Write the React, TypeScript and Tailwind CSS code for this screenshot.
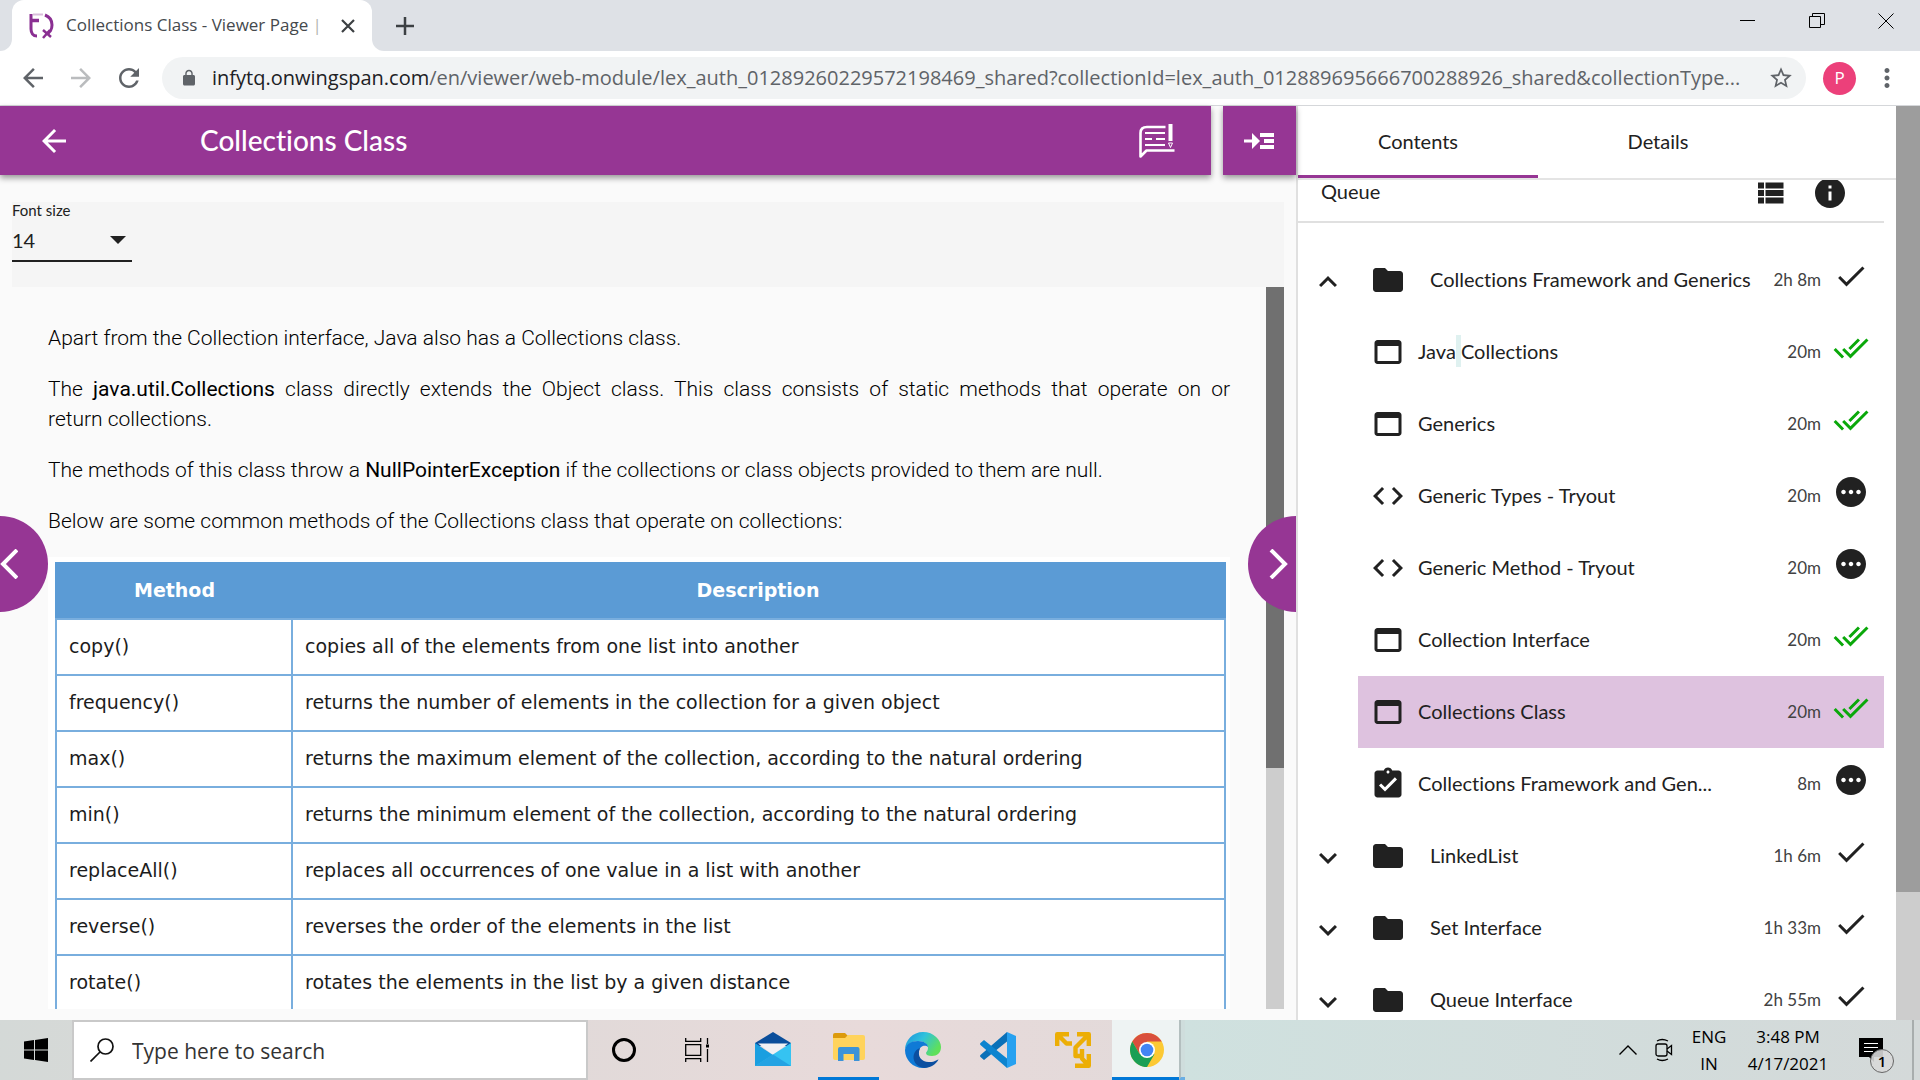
import React from "react";

type IconProps = { d: string; className?: string };

function Icon({ d, className = "size-9" }: IconProps) {
  return (
    <svg viewBox="0 0 24 24" fill="currentColor" aria-hidden="true" className={`shrink-0 ${className}`}>
      <path d={d} />
    </svg>
  );
}

const paths = {
  back: "M20 11H7.83l5.59-5.59L12 4l-8 8 8 8 1.41-1.41L7.83 13H20v-2z",
  folder: "M10 4H4c-1.1 0-1.99.9-1.99 2L2 18c0 1.1.9 2 2 2h16c1.1 0 2-.9 2-2V8c0-1.1-.9-2-2-2h-8l-2-2z",
  web: "M19 4H5c-1.11 0-2 .9-2 2v12c0 1.1.89 2 2 2h14c1.1 0 2-.9 2-2V6c0-1.1-.89-2-2-2zm0 14H5V8h14v10z",
  code: "M9.4 16.6L4.8 12l4.6-4.6L8 6l-6 6 6 6 1.4-1.4zm5.2 0l4.6-4.6-4.6-4.6L16 6l6 6-6 6-1.4-1.4z",
  quiz: "M19 3h-4.18C14.4 1.84 13.3 1 12 1c-1.3 0-2.4.84-2.82 2H5c-1.1 0-2 .9-2 2v14c0 1.1.9 2 2 2h14c1.1 0 2-.9 2-2V5c0-1.1-.9-2-2-2zm-7 0c.55 0 1 .45 1 1s-.45 1-1 1-1-.45-1-1 .45-1 1-1zm-2 14l-4-4 1.41-1.41L10 14.17l6.59-6.59L18 9l-8 8z",
  up: "M12 8l-6 6 1.41 1.41L12 10.83l4.59 4.58L18 14z",
  down: "M16.59 8.59L12 13.17 7.41 8.59 6 10l6 6 6-6z",
  done: "M9 16.2L4.8 12l-1.4 1.4L9 19 21 7l-1.4-1.4L9 16.2z",
  doneAll: "M18 7l-1.41-1.41-6.34 6.34 1.41 1.41L18 7zm4.24-1.41L11.66 16.17 7.48 12l-1.41 1.41L11.66 19l12-12-1.42-1.41zM.41 13.41L6 19l1.41-1.41L1.83 12 .41 13.41z",
  pending: "M12 2C6.48 2 2 6.48 2 12s4.48 10 10 10 10-4.48 10-10S17.52 2 12 2zM7 13.5c-.83 0-1.5-.67-1.5-1.5s.67-1.5 1.5-1.5 1.5.67 1.5 1.5-.67 1.5-1.5 1.5zm5 0c-.83 0-1.5-.67-1.5-1.5s.67-1.5 1.5-1.5 1.5.67 1.5 1.5-.67 1.5-1.5 1.5zm5 0c-.83 0-1.5-.67-1.5-1.5s.67-1.5 1.5-1.5 1.5.67 1.5 1.5-.67 1.5-1.5 1.5z",
  list: "M4 14h4v-4H4v4zm0 5h4v-4H4v4zM4 9h4V5H4v4zm5 5h12v-4H9v4zm0 5h12v-4H9v4zM9 5v4h12V5H9z",
  info: "M12 2C6.48 2 2 6.48 2 12s4.48 10 10 10 10-4.48 10-10S17.52 2 12 2zm1 15h-2v-6h2v6zm0-8h-2V7h2v2z",
  lock: "M18 8h-1V6c0-2.76-2.24-5-5-5S7 3.24 7 6v2H6c-1.1 0-2 .9-2 2v10c0 1.1.9 2 2 2h12c1.1 0 2-.9 2-2V10c0-1.1-.9-2-2-2zM15.1 8H8.9V6c0-1.71 1.39-3.1 3.1-3.1 1.71 0 3.1 1.39 3.1 3.1v2z",
  reload: "M17.65 6.35C16.2 4.9 14.21 4 12 4c-4.42 0-7.99 3.58-7.99 8s3.57 8 7.99 8c3.73 0 6.84-2.55 7.73-6h-2.08c-.82 2.33-3.04 4-5.65 4-3.31 0-6-2.69-6-6s2.69-6 6-6c1.66 0 3.14.69 4.22 1.78L13 11h7V4l-2.35 2.35z",
  star: "M22 9.24l-7.19-.62L12 2 9.19 8.63 2 9.24l5.46 4.73L5.82 21 12 17.27 18.18 21l-1.63-7.03L22 9.24zM12 15.4l-3.76 2.27 1-4.28-3.32-2.88 4.38-.38L12 6.1l1.71 4.04 4.38.38-3.32 2.88 1 4.28L12 15.4z",
  more: "M12 8c1.1 0 2-.9 2-2s-.9-2-2-2-2 .9-2 2 .9 2 2 2zm0 2c-1.1 0-2 .9-2 2s.9 2 2 2 2-.9 2-2-.9-2-2-2zm0 6c-1.1 0-2 .9-2 2s.9 2 2 2 2-.9 2-2-.9-2-2-2z",
};

function BrowserTabs() {
  return (
    <div className="flex h-[51px] shrink-0 items-stretch bg-[#dee1e6]">
      <div className="w-3 bg-white">
        <div className="h-full rounded-br-xl bg-[#dee1e6]" />
      </div>
      <div className="flex w-[360px] items-center rounded-t-xl bg-white pr-3 pl-4">
        <svg viewBox="0 0 26 26" className="size-[26px] shrink-0" fill="none" stroke="#8a2f92" strokeWidth="3">
          <path d="M3 1v15c0 4 2 7 6 7" />
          <path d="M2 7.500h9" strokeWidth="3.500" />
          <path d="M17 2c5 2 7 6 7 10s-2 8-6 9" />
          <path d="M5 1.500h10" stroke="#d9bddb" strokeWidth="2" />
          <path d="M15 17l8 7M22 17l-7 8" strokeWidth="2.500" />
        </svg>
        <span className="relative ml-3 flex-1 overflow-hidden pb-0.5 text-[17px] whitespace-nowrap text-[#45494d]">
          Collections Class - Viewer Page |
          <span className="absolute inset-y-0 right-0 w-4 bg-linear-to-r from-white/0 to-white" />
        </span>
        <button aria-label="Close tab" className="ml-3 flex size-6 items-center justify-center text-[#3c4043]">
          <svg viewBox="0 0 14 14" className="size-3.5" stroke="currentColor" strokeWidth="2.200">
            <path d="M1 1l12 12M13 1L1 13" />
          </svg>
        </button>
      </div>
      <div className="w-3 bg-white">
        <div className="h-full rounded-bl-xl bg-[#dee1e6]" />
      </div>
      <div className="flex flex-1 items-center justify-between bg-[#dee1e6]">
        <button aria-label="New tab" className="ml-2.5 flex size-[22px] items-center justify-center text-[#3c4043]">
          <svg viewBox="0 0 18 18" className="size-[18px]" stroke="currentColor" strokeWidth="2.500">
            <path d="M9 0v18M0 9h18" />
          </svg>
        </button>
        <div className="flex h-full items-start">
          <button aria-label="Minimize" className="flex h-[42px] w-[69px] items-center justify-center">
            <svg viewBox="0 0 16 16" className="size-4" stroke="#000" fill="none"><path d="M0 7.500h15" /></svg>
          </button>
          <button aria-label="Restore" className="flex h-[42px] w-[69px] items-center justify-center">
            <svg viewBox="0 0 16 16" className="size-4" stroke="#000" fill="none"><path d="M.5 3.500h11v11H.5zM3.500 3.500v-3h12v11h-4" /></svg>
          </button>
          <button aria-label="Close" className="flex h-[42px] w-[69px] items-center justify-center">
            <svg viewBox="0 0 16 16" className="size-4" stroke="#000" fill="none"><path d="M.5 .5l15 15M15.500 .5l-15 15" /></svg>
          </button>
        </div>
      </div>
    </div>
  );
}

function AddressBar() {
  return (
    <div className="flex h-[55px] shrink-0 items-center border-b border-[#d5d7da] bg-white pr-[18px] pl-[18px] text-[#5f6368]">
      <button aria-label="Back" className="flex size-[30px] items-center justify-center"><Icon d={paths.back} className="size-[30px]" /></button>
      <button aria-label="Forward" className="ml-[18px] flex size-[30px] items-center justify-center text-[#babcbe]"><Icon d={paths.back} className="size-[30px] rotate-180" /></button>
      <button aria-label="Reload" className="ml-[18px] flex size-[30px] items-center justify-center"><Icon d={paths.reload} className="size-[30px]" /></button>
      <div className="ml-[18px] flex h-[42px] min-w-0 flex-1 items-center rounded-full bg-[#f1f3f4] pr-3 pl-[18px]">
        <Icon d={paths.lock} className="size-[18px]" />
        <span className="ml-3.5 flex-1 truncate text-[20px]">
          <span className="text-[#202124]">infytq.onwingspan.com</span>
          /en/viewer/web-module/lex_auth_01289260229572198469_shared?collectionId=lex_auth_012889695666700288926_shared&amp;collectionType...
        </span>
        <button aria-label="Bookmark"><Icon d={paths.star} className="size-[26px]" /></button>
      </div>
      <button aria-label="Profile" className="ml-[17px] flex size-[33px] items-center justify-center rounded-full bg-[#ec407a] text-[17px] text-white">P</button>
      <button aria-label="Menu" className="ml-4"><Icon d={paths.more} className="size-[30px]" /></button>
    </div>
  );
}

const methods = [
  ["copy()", "copies all of the elements from one list into another"],
  ["frequency()", "returns the number of elements in the collection for a given object"],
  ["max()", "returns the maximum element of the collection, according to the natural ordering"],
  ["min()", "returns the minimum element of the collection, according to the natural ordering"],
  ["replaceAll()", "replaces all occurrences of one value in a list with another"],
  ["reverse()", "reverses the order of the elements in the list"],
  ["rotate()", "rotates the elements in the list by a given distance"],
];

function Lesson() {
  return (
    <section className="relative flex min-w-0 flex-1 flex-col bg-[#fafafa]">
      <header className="z-10 flex h-[69px] shrink-0 gap-3 font-[Lato,sans-serif] [font-variant-ligatures:none]">
        <div className="flex flex-1 items-center bg-[#963694] pr-9 pl-9 text-white shadow-[0_3px_6px_rgba(0,0,0,0.4)]">
          <button aria-label="Go back"><Icon d={paths.back} /></button>
          <h1 className="ml-32 flex-1 pb-0.5 text-[28px] leading-9 font-medium">Collections Class</h1>
          <button aria-label="Feedback">
            <svg viewBox="0 0 36 36" className="size-9" fill="none" stroke="#fff" strokeWidth="2.600">
              <path d="M26.500 4H8C3.500 4 1.500 6 1.500 10v23.500l6-6h28" strokeLinejoin="round" />
              <path d="M6 10h20M6 16h7M17 16h9M6 22h20" strokeWidth="2" />
              <path d="M29.500 1h4v17h-4z" fill="#fff" stroke="none" />
              <path d="M29.500 20h4l-2 4.500z" fill="none" strokeWidth="1" />
            </svg>
          </button>
        </div>
        <button aria-label="Toggle contents" className="flex w-[73px] items-center justify-center bg-[#963694] pr-0.5 shadow-[0_3px_6px_rgba(0,0,0,0.4)]">
          <svg viewBox="0 0 32 18" className="h-[18px] w-8" fill="#fff">
            <path d="M1 7.500h8V1l8 8-8 8v-6.500H1zM17 1h14v4H17zM21 7h10v4H21zM17 13h14v4H17z" />
          </svg>
        </button>
      </header>

      <div className="mx-3 mt-[27px] h-[85px] shrink-0 bg-[#f5f5f5] font-[Lato,sans-serif] text-[#212121] [font-variant-ligatures:none]">
        <div className="flex w-[120px] flex-col border-b-2 border-[#212121]">
          <label htmlFor="font-size" className="text-[15px] leading-[17px]">Font size</label>
          <div className="relative flex h-[41px] items-center">
            <select id="font-size" defaultValue="14" className="w-full appearance-none bg-transparent text-[20px] leading-6 outline-none">
              <option>14</option>
              <option>16</option>
              <option>18</option>
            </select>
            <svg viewBox="0 0 16 8" className="pointer-events-none absolute right-1.5 h-2 w-4" fill="#212121"><path d="M0 0h16L8 8z" /></svg>
          </div>
        </div>
      </div>

      <div className="mr-3 mb-[11px] flex min-h-0 flex-1">
        <article className="min-w-0 flex-1 overflow-hidden pt-9 pr-9 pl-12 font-[Roboto,sans-serif] text-[21px] leading-[30px] font-light text-black">
          <p className="mb-[21px]">Apart from the Collection interface, Java also has a Collections class.</p>
          <p className="mb-[21px] text-justify">
            The <b className="font-normal">java.util.Collections</b> class directly extends the Object class. This class consists of static methods that operate on or return&nbsp;collections.
          </p>
          <p className="mb-[21px]">
            The methods of this class throw a <b className="font-normal">NullPointerException</b> if the collections or class objects provided to them are null.
          </p>
          <p className="mb-[21px]">Below are some common methods of the Collections class that operate on collections:</p>
          <div className="bg-white pt-[5px] pr-1 pl-[7px]">
            <table className="w-full border-collapse border-2 border-[#5b9bd5] font-['DejaVu_Sans',sans-serif] text-[19px] leading-6 font-normal text-[#1c1c1c]">
              <thead>
                <tr className="h-14 bg-[#5b9bd5] text-white">
                  <th className="w-[236px] pb-0.5 font-bold">Method</th>
                  <th className="pb-0.5 font-bold">Description</th>
                </tr>
              </thead>
              <tbody>
                {methods.map(([name, text]) => (
                  <tr key={name} className="h-14">
                    <td className="border-2 border-[#79aede] px-3 pb-0.5">{name}</td>
                    <td className="border-2 border-[#79aede] px-3 pb-0.5">{text}</td>
                  </tr>
                ))}
              </tbody>
            </table>
          </div>
        </article>
        <div className="w-[18px] shrink-0 bg-[#cdcdcd]">
          <div className="h-2/3 bg-[#707070]" />
        </div>
      </div>

      <button aria-label="Previous" className="absolute top-[410px] left-0 flex h-24 w-12 items-center rounded-r-full bg-[#963694]">
        <svg viewBox="0 0 18 30" className="h-[30px] w-[18px]" fill="none" stroke="#fff" strokeWidth="4"><path d="M17 1L3 15l14 14" /></svg>
      </button>
      <button aria-label="Next" className="absolute top-[410px] right-0 flex h-24 w-12 items-center justify-end rounded-l-full bg-[#963694] pr-2">
        <svg viewBox="0 0 20 30" className="h-[30px] w-5" fill="none" stroke="#fff" strokeWidth="4"><path d="M3 1l14 14L3 29" /></svg>
      </button>
    </section>
  );
}

type Node = { label: React.ReactNode; icon: string; time: string; status: string; toggle?: string; active?: boolean };

const nodes: Node[] = [
  { label: "Collections Framework and Generics", icon: paths.folder, time: "2h 8m", status: "done", toggle: "up" },
  { label: <>Java<span className="bg-[#dff1f0] py-1"> </span>Collections</>, icon: paths.web, time: "20m", status: "all" },
  { label: "Generics", icon: paths.web, time: "20m", status: "all" },
  { label: "Generic Types - Tryout", icon: paths.code, time: "20m", status: "pending" },
  { label: "Generic Method - Tryout", icon: paths.code, time: "20m", status: "pending" },
  { label: "Collection Interface", icon: paths.web, time: "20m", status: "all" },
  { label: "Collections Class", icon: paths.web, time: "20m", status: "all", active: true },
  { label: "Collections Framework and Gen...", icon: paths.quiz, time: "8m", status: "pending" },
  { label: "LinkedList", icon: paths.folder, time: "1h 6m", status: "done", toggle: "down" },
  { label: "Set Interface", icon: paths.folder, time: "1h 33m", status: "done", toggle: "down" },
  { label: "Queue Interface", icon: paths.folder, time: "2h 55m", status: "done", toggle: "down" },
];

function TreeRow({ node }: { node: Node }) {
  return (
    <li className="flex h-[72px]">
      <div className="flex w-[60px] items-center justify-center pt-1">
        {node.toggle && (
          <button aria-label={node.toggle === "up" ? "Collapse" : "Expand"}>
            <Icon d={node.toggle === "up" ? paths.up : paths.down} />
          </button>
        )}
      </div>
      <a href="#" className={`flex flex-1 items-center pr-[15px] pl-3 ${node.active ? "bg-[#dec2df]" : ""}`}>
        <Icon d={node.icon} />
        <span className={`flex-1 pb-0.5 text-[20px] leading-6 whitespace-nowrap ${node.toggle ? "ml-6" : "ml-3"}`}>{node.label}</span>
        <span className="mr-3 text-[17px] leading-6 whitespace-nowrap text-[#424242]">{node.time}</span>
        <span className="pb-2">
          {node.status === "all" && <Icon d={paths.doneAll} className="size-9 text-[#0aa80a]" />}
          {node.status === "done" && <Icon d={paths.done} />}
          {node.status === "pending" && <Icon d={paths.pending} />}
        </span>
      </a>
    </li>
  );
}

function Contents() {
  return (
    <aside className="flex w-[600px] shrink-0 flex-col border-l-2 border-[#e0e0e0] bg-white font-[Lato,sans-serif] text-[#212121] [font-variant-ligatures:none]">
      <div role="tablist" className="flex h-[74px] shrink-0 border-b-2 border-[#e4e4e4] text-[20px]">
        <button role="tab" aria-selected="true" className="w-60 border-b-3 border-[#963694] pt-px">Contents</button>
        <button role="tab" aria-selected="false" className="w-60 pb-0.5">Details</button>
      </div>
      <div className="flex min-h-0 flex-1 flex-col overflow-hidden pr-3">
        <div className="flex h-[43px] shrink-0 items-start justify-between border-b-2 border-[#e0e0e0] pr-9 pl-[23px]">
          <h2 className="text-[20px] leading-[22px]">Queue</h2>
          <div className="-mt-[5px] flex gap-6">
            <button aria-label="List view"><Icon d={paths.list} /></button>
            <button aria-label="Information"><Icon d={paths.info} /></button>
          </div>
        </div>
        <ul className="mt-[21px]">
          {nodes.map((node, i) => <TreeRow key={i} node={node} />)}
        </ul>
      </div>
    </aside>
  );
}

function Taskbar() {
  return (
    <footer className="flex h-[60px] shrink-0 items-stretch bg-linear-to-r from-[#d4d9d7] via-[#e8dada] via-[45%] to-[#d4d9d9]">
      <button aria-label="Start" className="flex w-[72px] items-center justify-center">
        <svg viewBox="0 0 24 24" className="size-6"><path d="M0 3.400L10 2v9.500H0zM11 1.900L24 0v11.500H11zM0 12.500h10V22L0 20.600zM11 12.500h13V24l-13-1.900z" /></svg>
      </button>
      <label className="flex w-[516px] items-center border-2 border-[#c9c9c9] bg-white pl-4">
        <svg viewBox="0 0 24 24" className="size-6" fill="none" stroke="#111" strokeWidth="1.700"><circle cx="15.500" cy="8.500" r="7.500" /><path d="M10 14L.5 23.500" /></svg>
        <input aria-label="Search" placeholder="Type here to search" className="ml-[18px] min-w-0 flex-1 bg-transparent pt-1 text-[21px] outline-none placeholder:text-[#333]" />
      </label>
      <button aria-label="Cortana" className="flex w-[71px] items-center justify-center">
        <svg viewBox="0 0 26 26" className="size-[26px]" fill="none" stroke="#000" strokeWidth="3"><circle cx="13" cy="13" r="10.500" /></svg>
      </button>
      <button aria-label="Task View" className="flex w-[76px] items-center justify-center">
        <svg viewBox="0 0 24 24" className="size-6" fill="none" stroke="#000" strokeWidth="1.300"><path d="M.7 0v3.300h15V0M.7 6.700h15v10.600H.7zM.7 24v-3.300h15V24M22.500 0v6M22.500 11v13" /><path d="M21 6.500h3v3h-3z" fill="#000" stroke="none" /></svg>
      </button>
      <button aria-label="Mail" className="flex w-[76px] items-center justify-center">
        <svg viewBox="0 0 36 36" className="size-9">
          <path d="M0 11L18 0l18 11v3H0z" fill="#0a4e9b" /><path d="M3 11.500h30L18 23z" fill="#f1f1f4" />
          <path d="M0 11l18 12v11H0z" fill="#1a9fe0" /><path d="M36 11L0 34h36z" fill="#35c3f2" /><path d="M18 22.500L36 34H0z" fill="#1e96dd" opacity=".7" />
        </svg>
      </button>
      <button aria-label="File Explorer" className="mx-[7px] flex w-[61px] items-center justify-center border-b-3 border-[#0078d7]">
        <svg viewBox="0 0 32 32" className="size-8">
          <path d="M0 2a2 2 0 012-2h10l3 3v3H0z" fill="#dc9a0c" /><path d="M0 5h12l3-3h15a2 2 0 012 2v21a2 2 0 01-2 2H2a2 2 0 01-2-2z" fill="#ffd35c" />
          <path d="M5 28V16a2 2 0 012-2h17.500a2 2 0 012 2v12H21v-7H10.500v7z" fill="#3b93d8" />
        </svg>
      </button>
      <button aria-label="Edge" className="flex w-[74px] items-center justify-center">
        <svg viewBox="0 0 36 36" className="size-9">
          <defs>
            <linearGradient id="edge-top" x1="0" x2="1" y1="0" y2=".5"><stop offset="0" stopColor="#1c8fdc" /><stop offset=".5" stopColor="#2fc2dc" /><stop offset="1" stopColor="#5fe05a" /></linearGradient>
          </defs>
          <path d="M0 18C0 8 8 0 18 0c11 0 18 8 18 15 0 6-4 9-9 9-4 0-6-1-6-3 0-1 2-2 2-5 0-4-4-7-10-7C6 9 1 13 0 18z" fill="url(#edge-top)" />
          <path d="M0 18c1-6 6-9 13-9 6 0 10 3 10 6-2-2-8-2-9 4-2 7 4 14 13 13-3 3-6 4-9 4C8 36 0 28 0 18z" fill="#0f7ad6" />
          <path d="M15 16c-4 9 3 15 10 14 5 0 8-3 8.500-2.500C31 32 26 36 19 36 11 35 7 28 9 22c1-3 3-5 6-6z" fill="#0c4fa0" />
        </svg>
      </button>
      <button aria-label="Visual Studio Code" className="flex w-[76px] items-center justify-center">
        <svg viewBox="0 0 36 36" className="size-9">
          <path d="M27 0l9 4v28l-9 4z" fill="#27a1f0" /><path d="M27 0v9.500L4 28l-3.500-3c-.6-.6-.6-1.500 0-2z" fill="#0a70b8" />
          <path d="M27 36v-9.500L4 8 .5 11c-.6.6-.6 1.500 0 2z" fill="#0d84cf" />
        </svg>
      </button>
      <button aria-label="VMware" className="flex w-[74px] items-center justify-center">
        <svg viewBox="0 0 36 36" className="size-9" fill="none" stroke="#ecae06" strokeWidth="4.400" strokeLinejoin="round">
          <path d="M2.200 14V2.200H14M3 3l8.500 8.500H17M22 2.200h11.800V14M33 3L20.500 15.500V24H25M20 33.800h13.800V22M33 33l-6-6.500V17" />
        </svg>
      </button>
      <button aria-label="Chrome" className="ml-0.5 flex w-[67px] items-center justify-center border-b-3 border-[#0078d7] bg-[#eef3f3] pt-[3px] pl-[3px]">
        <svg viewBox="0 0 34 34" className="size-[34px]">
          <circle cx="17" cy="17" r="17" fill="#fcc934" />
          <path d="M2.300 8.500A17 17 0 0131.700 8.500H17L9.600 21z" fill="#d94f3d" />
          <path d="M2.300 8.500A17 17 0 0017 34l7.400-12.700L9.600 21z" fill="#1a9f55" />
          <circle cx="17" cy="17" r="8" fill="#fff" /><circle cx="17" cy="17" r="6.300" fill="#4285f4" />
        </svg>
      </button>
      <div className="w-1.5 border-b-3 border-l-2 border-b-[#6aaee3] border-l-[#b4bfbf] bg-[#cfdddc]" />
      <div className="flex flex-1 items-center justify-end bg-linear-to-r from-[#cfe1df] to-[#d4d9d9] text-center text-[17px] leading-[27px] text-black">
        <button aria-label="Show hidden icons">
          <svg viewBox="0 0 18 10" className="h-2.5 w-[18px]" fill="none" stroke="#000" strokeWidth="1.400"><path d="M.5 9.500L9 1l8.500 8.500" /></svg>
        </button>
        <svg viewBox="0 0 18 24" className="ml-[18px] h-6 w-[18px]" fill="none" stroke="#000" strokeWidth="1.300"><rect x="1" y="6" width="11" height="12" rx="2" /><path d="M12 11l4.500-3.500v9L12 13M2 3q5-3 11 0M2 21q5 3 11 0" /></svg>
        <button className="ml-4 w-10">ENG<br />IN</button>
        <button className="ml-3 w-[94px] whitespace-nowrap">3:48 PM<br />4/17/2021</button>
        <button aria-label="Notifications" className="relative ml-5 h-full w-10">
          <svg viewBox="0 0 24 24" className="absolute top-[18px] left-1 size-6"><path d="M0 0h24v19h-9v5l-5-5H0z" /><path d="M5 5.500h14M5 9.500h14M5 13.500h9" stroke="#fff" strokeWidth="1.200" /></svg>
          <span className="absolute top-[29px] left-[15px] flex size-6 items-center justify-center rounded-full border border-[#666] bg-[#d8d8d8]/90 text-[15px] font-semibold">1</span>
        </button>
        <div className="ml-[17px] h-full w-2 border-l-2 border-[#a8adad]" />
      </div>
    </footer>
  );
}

export default function App() {
  return (
    <div className="flex h-screen flex-col overflow-hidden font-['Open_Sans',sans-serif]">
      <BrowserTabs />
      <AddressBar />
      <main className="flex min-h-0 flex-1">
        <Lesson />
        <Contents />
        <div className="w-6 shrink-0 bg-[#cdcdcd]">
          <div className="h-[86%] bg-[#9d9d9d]" />
        </div>
      </main>
      <Taskbar />
    </div>
  );
}
